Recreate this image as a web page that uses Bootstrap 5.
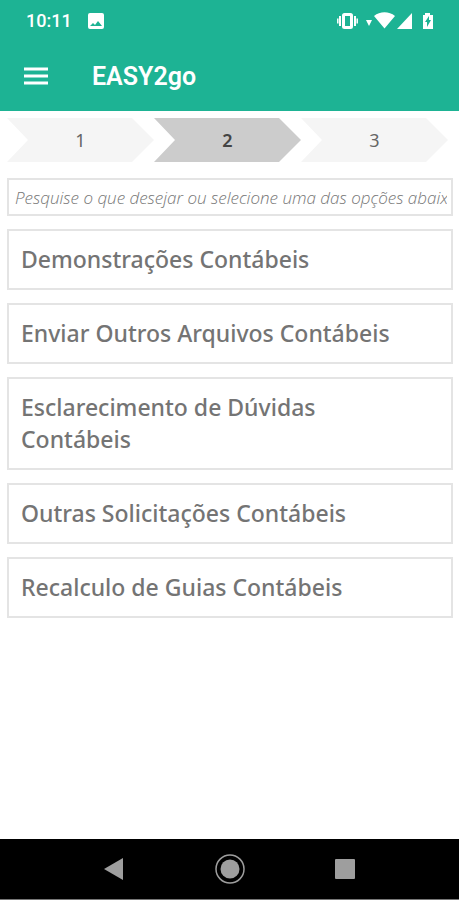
<!DOCTYPE html>
<html lang="pt-BR">
<head>
<meta charset="utf-8">
<meta name="viewport" content="width=device-width, initial-scale=1">
<title>EASY2go</title>
<link href="https://cdn.jsdelivr.net/npm/bootstrap@5.3.0/dist/css/bootstrap.min.css" rel="stylesheet">
<style>
body { font-family: "Noto Sans", sans-serif; color: #666; }
svg { display: block; }
.top-area { background: #1db394; font-family: Roboto, sans-serif; }
.status-bar { height: 41px; padding: 0 25px 0 26px; font-size: 18px; font-weight: 500; }
.app-bar { height: 70px; padding: 0 23px; gap: 43px; }
.app-title { font-size: 25px; line-height: 32px; font-weight: 600; padding-top: 2px; }
.content-area { padding: 7px 6px 16px 7px; }
.steps { padding-right: 5px; margin-bottom: 16px; }
.step-arrow { height: 44px; border: 0; padding: 0; background: #f5f5f5; color: #666; font-size: 18px;
  clip-path: polygon(0 0, calc(100% - 22px) 0, 100% 50%, calc(100% - 22px) 100%, 0 100%, 21px 50%); }
.step-arrow.current { background: #ccc; color: #444; font-weight: 600; }
.search-box { height: 38px; padding: 0 4px 0 6px; border: 2px solid #e4e4e4; font-family: "Open Sans", sans-serif; font-size: 17px; font-weight: 300; font-style: italic; margin-bottom: 13px; }
.search-box::placeholder { color: #777; opacity: 1; }
.options { gap: 13px; }
.option-item { border: 2px solid #e4e4e4; padding: 12px 28px 13px 12px; font-size: 23px; line-height: 32px; font-weight: 500; color: #747474; background: #fff; }
.nav-keys { height: 61px; background: #000; border-bottom: 1px solid #777; padding: 0 99px; }
</style>
<script src="https://cdn.jsdelivr.net/npm/bootstrap@5.3.0/dist/js/bootstrap.bundle.min.js"></script>
</head>
<body class="min-vh-100 d-flex flex-column bg-white">
<header class="top-area text-white">
  <div class="status-bar d-flex align-items-center">
    <span>10:11</span>
    <svg class="ms-3" width="16" height="16" viewBox="0 0 16 16" aria-hidden="true"><path fill="#fff" fill-rule="evenodd" d="M2 0h12a2 2 0 0 1 2 2v12a2 2 0 0 1-2 2H2a2 2 0 0 1-2-2V2a2 2 0 0 1 2-2zM2 13h12l-4-5-3 4-2-2z"/></svg>
    <svg class="ms-auto" width="97" height="20" viewBox="0 0 97 20" aria-hidden="true">
      <g fill="none" stroke="#fff"><rect x="6.500" y="3.500" width="8" height="13" rx="1" stroke-width="3"/><path d="M3 5v10M18 5v10" stroke-width="2"/><path d="M0.800 7.500v5M20.200 7.500v5" stroke-width="1.500"/></g>
      <path fill="#fff" d="M29 9h6l-3 6zM37 5c6-5 15-5 21 0L47.500 17.500zM75 2v16H60z"/>
      <path fill="#fff" fill-rule="evenodd" d="M86 4h2V2h5v2h3v14H86zM92 5l-4 6h2v5l4-7h-2z"/>
    </svg>
  </div>
  <nav class="app-bar d-flex align-items-center" aria-label="Principal">
    <button class="btn border-0 p-0" type="button" aria-label="Menu">
      <svg width="26" height="18" viewBox="0 0 26 18" aria-hidden="true"><path d="M1 2h24M1 9h24M1 16h24" stroke="#fff" stroke-width="3"/></svg>
    </button>
    <h1 class="app-title mb-0">EASY2go</h1>
  </nav>
</header>
<main class="content-area flex-grow-1">
  <div class="steps d-flex" role="group" aria-label="Etapas">
    <button class="step-arrow flex-fill" type="button">1</button>
    <button class="step-arrow current flex-fill" type="button" aria-current="step">2</button>
    <button class="step-arrow flex-fill" type="button">3</button>
  </div>
  <input class="search-box form-control rounded-0" type="text" aria-label="Pesquisar opções" placeholder="Pesquise o que desejar ou selecione uma das opções abaix">
  <div class="options d-flex flex-column">
    <button class="option-item text-start" type="button">Demonstrações Contábeis</button>
    <button class="option-item text-start" type="button">Enviar Outros Arquivos Contábeis</button>
    <button class="option-item text-start" type="button">Esclarecimento de Dúvidas Contábeis</button>
    <button class="option-item text-start" type="button">Outras Solicitações Contábeis</button>
    <button class="option-item text-start" type="button">Recalculo de Guias Contábeis</button>
  </div>
</main>
<footer class="nav-keys d-flex align-items-center justify-content-between">
  <button class="btn border-0 p-0" type="button" aria-label="Voltar"><svg width="30" height="30" viewBox="0 0 30 30"><path fill="#9e9e9e" d="M5 15 24 4v22z"/></svg></button>
  <button class="btn border-0 p-0" type="button" aria-label="Início"><svg width="30" height="30" viewBox="0 0 30 30"><circle cx="15" cy="15" r="9.500" fill="#9e9e9e"/><circle cx="15" cy="15" r="14" fill="none" stroke="#9e9e9e" stroke-width="1.500"/></svg></button>
  <button class="btn border-0 p-0" type="button" aria-label="Recentes"><svg width="30" height="30" viewBox="0 0 30 30"><rect x="5" y="5" width="20" height="20" rx="1" fill="#9e9e9e"/></svg></button>
</footer>
</body>
</html>
